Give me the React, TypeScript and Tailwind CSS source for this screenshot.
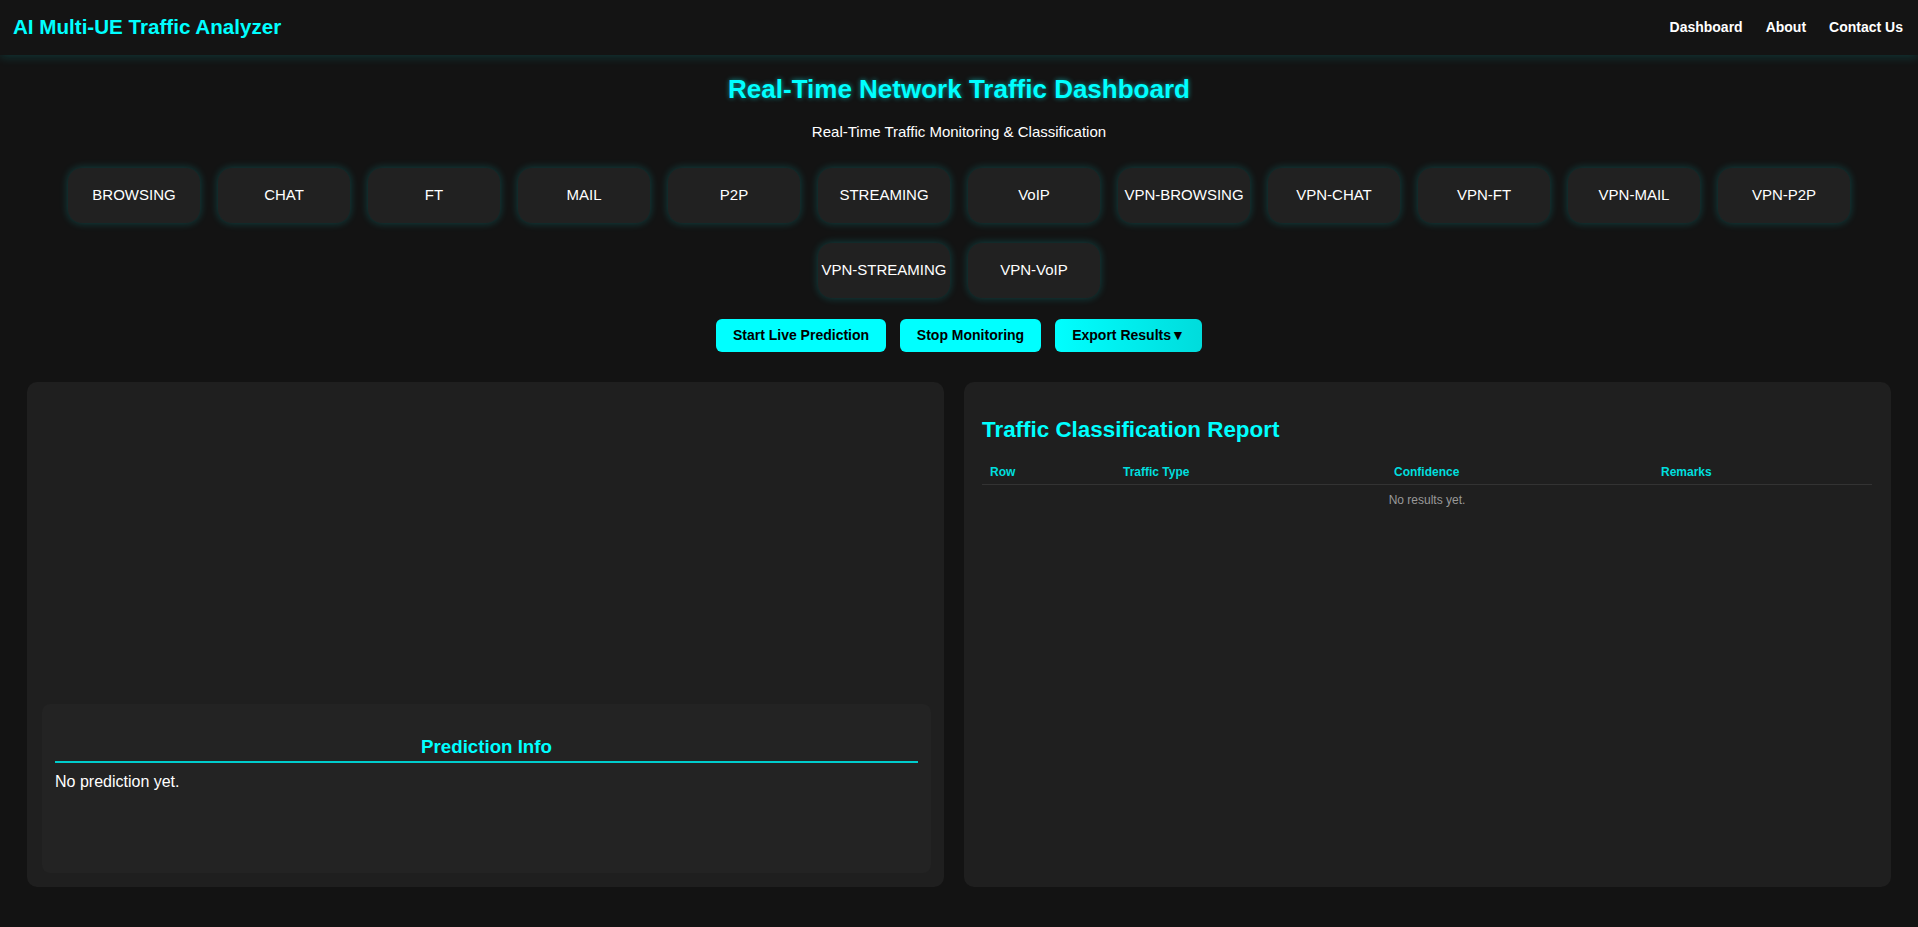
import React from "react";

const categories = [
  "BROWSING",
  "CHAT",
  "FT",
  "MAIL",
  "P2P",
  "STREAMING",
  "VoIP",
  "VPN-BROWSING",
  "VPN-CHAT",
  "VPN-FT",
  "VPN-MAIL",
  "VPN-P2P",
  "VPN-STREAMING",
  "VPN-VoIP",
];

export default function App() {
  return (
    <div className="min-h-[927px] bg-[#131313] font-['Liberation_Sans',Arial,sans-serif] text-white">
      <header className="flex h-[55px] items-center justify-between bg-[#141414] pl-[13px] pr-[15px] shadow-[0_2px_10px_rgba(0,255,255,0.15)]">
        <h1 className="text-[20.6px] font-bold text-[#00ffff]">AI Multi-UE Traffic Analyzer</h1>
        <nav className="flex items-center gap-[23px] text-[14px] font-bold text-white">
          <a>Dashboard</a>
          <a>About</a>
          <a>Contact Us</a>
        </nav>
      </header>

      <main className="flex flex-col items-center">
        <h2 className="mt-[19px] text-[26px] font-bold leading-[30px] text-[#00ffff] [text-shadow:0_0_5px_rgba(0,255,255,0.55)]">
          Real-Time Network Traffic Dashboard
        </h2>
        <p className="mt-[19px] text-[15px] leading-[17px] text-white">
          Real-Time Traffic Monitoring &amp; Classification
        </p>

        <div className="mt-[28px] flex w-full flex-wrap justify-center gap-x-[18px] gap-y-[20px] px-[20px]">
          {categories.map((c) => (
            <button
              key={c}
              className="flex h-[55px] w-[132px] items-center justify-center rounded-[14px] bg-[#212121] text-[15px] text-white shadow-[0_0_9px_rgba(0,255,255,0.22)]"
            >
              {c}
            </button>
          ))}
        </div>

        <div className="mt-[21px] flex gap-[14px]">
          <button className="h-[33px] w-[170px] rounded-[6px] bg-[#00ffff] text-[14px] font-bold text-black">
            Start Live Prediction
          </button>
          <button className="h-[33px] w-[141px] rounded-[6px] bg-[#00ffff] text-[14px] font-bold text-black">
            Stop Monitoring
          </button>
          <button className="h-[33px] w-[147px] rounded-[6px] bg-linear-to-r from-[#00ffff] to-[#00dcdc] text-[14px] font-bold text-black">
            Export Results▼
          </button>
        </div>

        <div className="mt-[30px] flex w-full gap-[20px] px-[27px]">
          <section className="flex w-[917px] flex-col rounded-[10px] bg-[#1f1f1f] pb-[14px] pl-[15px] pr-[13px] pt-[15px]">
            <div className="h-[307px]" />
            <div className="h-[169px] rounded-[8px] bg-[#232323] px-[13px] pt-[32px]">
              <h3 className="border-b-2 border-[#00cccc] pb-[4px] text-center text-[18.7px] font-bold leading-[21px] text-[#00ffff]">
                Prediction Info
              </h3>
              <p className="mt-[10px] text-[16px] leading-[18px] text-white">No prediction yet.</p>
            </div>
          </section>

          <section className="w-[927px] rounded-[10px] bg-[#1f1f1f] px-[18px] pt-[18px]">
            <h2 className="mt-[17px] text-[22.4px] font-bold leading-[26px] text-[#00ffff]">
              Traffic Classification Report
            </h2>
            <div className="mt-[17px] w-[890px]">
              <div className="grid grid-cols-[133px_271px_267px_1fr] border-b border-[#333333] text-[12px] font-bold leading-[14px] text-[#00dede]">
                <div className="px-[8px] py-[5px]">Row</div>
                <div className="px-[8px] py-[5px]">Traffic Type</div>
                <div className="px-[8px] py-[5px]">Confidence</div>
                <div className="px-[8px] py-[5px]">Remarks</div>
              </div>
              <div className="py-[8px] text-center text-[12px] leading-[14px] text-[#999999]">No results yet.</div>
            </div>
          </section>
        </div>
      </main>
    </div>
  );
}
